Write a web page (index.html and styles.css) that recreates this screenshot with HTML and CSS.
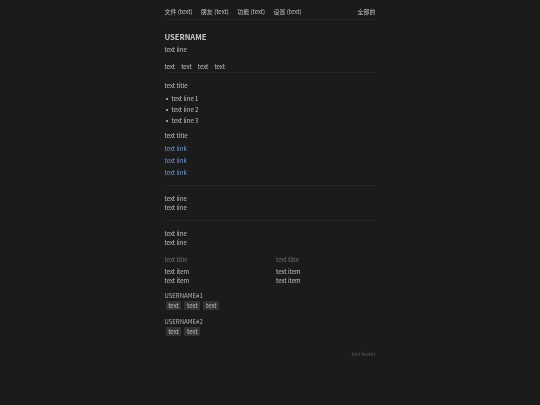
FILE: index.html
```html
<!DOCTYPE html>
<html lang="en">
<head>
    <meta charset="UTF-8">
    <title>Profile</title>
    <link rel="stylesheet" href="styles.css">
</head>
<body>
    <div class="container">
        <div class="navbar">
            <div class="nav-links">
                <span>文件 (text)</span>
                <span>朋友 (text)</span>
                <span>功能 (text)</span>
                <span>设置 (text)</span>
            </div>
            <span>全部的</span>
        </div>
        <div class="profile">
            <h1>USERNAME</h1>
            <p>text line</p>
        </div>
        <div class="tabs">
            <span>text</span>
            <span>text</span>
            <span>text</span>
            <span>text</span>
        </div>
        <div class="section">
            <div class="title">text title</div>
            <ul class="list">
                <li>text line 1</li>
                <li>text line 2</li>
                <li>text line 3</li>
            </ul>
            <div class="title">text title</div>
            <div class="links">
                <a href="#">text link</a>
                <a href="#">text link</a>
                <a href="#">text link</a>
            </div>
        </div>
        <div class="lines divided">
            <p>text line</p>
            <p>text line</p>
        </div>
        <div class="lines">
            <p>text line</p>
            <p>text line</p>
        </div>
        <div class="columns">
            <div>
                <div class="muted">text title</div>
                <p>text item</p>
                <p>text item</p>
            </div>
            <div>
                <div class="muted">text title</div>
                <p>text item</p>
                <p>text item</p>
            </div>
        </div>
        <div class="user">
            <div class="user-name">USERNAME#1</div>
            <div class="tags">
                <span>text</span>
                <span>text</span>
                <span>text</span>
            </div>
        </div>
        <div class="user">
            <div class="user-name">USERNAME#2</div>
            <div class="tags">
                <span>text</span>
                <span>text</span>
            </div>
        </div>
        <div class="footer">text footer</div>
    </div>
</body>
</html>
```

FILE: styles.css
```css
html, body {
    height: 100%;
}
body {
    margin: 0;
    background-color: #1b1b1b;
    color: #c0c0c0;
    font-family: "Noto Sans CJK SC", "Noto Sans", sans-serif;
    font-size: 6px;
    line-height: 9px;
    overflow: hidden;
}
p {
    margin: 0;
}
.container {
    width: 211px;
    margin: 0 auto;
    padding-top: 6.5px;
    filter: blur(0.25px);
}
.navbar {
    display: flex;
    justify-content: space-between;
    padding-bottom: 3.5px;
    border-bottom: 1px solid #252525;
}
.nav-links {
    display: flex;
    gap: 8.4px;
}
.profile {
    margin-top: 12px;
}
.profile h1 {
    margin: 0 0 3px;
    font-size: 7.6px;
    line-height: 10px;
    font-weight: 700;
    color: #c8c8c8;
}
.tabs {
    display: flex;
    gap: 6.1px;
    margin-top: 8px;
    padding-bottom: 1px;
    border-bottom: 1px solid #252525;
}
.section {
    margin-top: 8px;
}
.list {
    margin: 3px 0 5px;
    padding-left: 1px;
    list-style: none;
}
.list li {
    display: flex;
    align-items: center;
    gap: 4px;
    height: 11px;
}
.list li::before {
    content: "";
    width: 2px;
    height: 2px;
    background: #c4c4c4;
    border-radius: 50%;
}
.links {
    display: flex;
    flex-direction: column;
    gap: 3px;
    margin-top: 4px;
}
.links a {
    color: #6f98d4;
    text-decoration: none;
}
.lines {
    margin-top: 8px;
}
.lines.divided {
    margin-top: 8px;
    padding: 8px 0;
    border-top: 1px solid #252525;
    border-bottom: 1px solid #252525;
}
.columns {
    display: grid;
    grid-template-columns: 1fr 1fr;
    gap: 12px;
    margin-top: 8px;
}
.muted {
    color: #6f6f6f;
    margin-bottom: 3px;
}
.user {
    margin-top: 6px;
}
.user + .user {
    margin-top: 7px;
}
.user-name {
    color: #b4b4b4;
}
.tags {
    display: flex;
    gap: 3px;
    margin: 1px 0 0 1px;
}
.tags span {
    padding: 0 2.7px;
    height: 9px;
    background: #333333;
    border-radius: 1px;
}
.footer {
    margin-top: 13px;
    text-align: right;
    font-size: 5px;
    color: #5a5a5a;
}
```
